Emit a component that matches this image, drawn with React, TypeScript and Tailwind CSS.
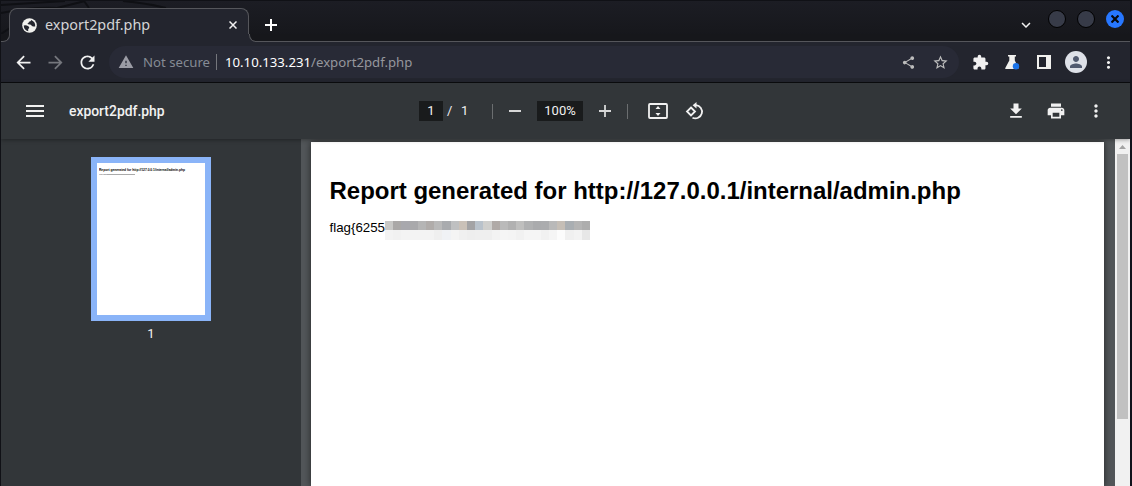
import type { ReactNode } from "react";
import {
  MdAdd, MdArrowBack, MdArrowForward, MdExpandMore, MdExtension,
  MdMenu, MdMoreVert, MdPerson, MdPrint, MdRefresh, MdRemove, MdShare,
  MdStarBorder, MdWarning, MdDownload,
} from "react-icons/md";

function Cell({ w, children }: { w: string; children: ReactNode }) {
  return <div className={`${w} flex h-full shrink-0 items-center justify-center`}>{children}</div>;
}

function Globe() {
  return (
    <svg className="ml-[12px] shrink-0" width="15" height="15" viewBox="0 0 15 15">
      <circle cx="7.5" cy="7.5" r="7.3" fill="#f1f1ee" />
      <path d="M1.7 7.4q3.2-.5 4.1.7 1 .4 1.4 1.2.2 1.4-1 1.6v2.3Q2 12 1.7 7.4ZM9.3 2Q8.8 3.6 7 3.8q-.3 1.4-1.6 1.8.4 1 2.6.9 1.6.2 1.8 1.6l1.5.4 1.9-.1Q13.600 4 9.300 2Z" fill="#23252e" />
    </svg>
  );
}

function WindowStrip() {
  return (
    <div className="relative h-[42px] shrink-0 overflow-hidden border-t border-[#101116] bg-linear-to-b from-[#1c1d24] to-[#15161a]">
      <svg className="absolute left-0 top-0" width="200" height="42" fill="none">
        <path d="M0 4 L64 0 M0 12 Q30 6 56 7 L84 0 M0 33 L9 27 M88 7 L83 0 M122 0 Q145 2 165 7" stroke="#0f1014" strokeWidth="2" />
      </svg>
      <div className="relative mt-[7px] flex h-[26px]">
        <div className="ml-2 flex h-[26px] w-[240px] shrink-0 items-start rounded-t-[8px] border-x border-t border-[#55565b] bg-[#23252e]">
          <div className="flex h-8 w-full items-center">
            <Globe />
            <span className="ml-2 font-['Noto_Sans',sans-serif] text-[14.4px] leading-5 text-[#d4d4d6]">export2pdf.php</span>
            <svg className="ml-auto mr-[11px]" width="8" height="8" viewBox="0 0 8 8"><path d="M.5.5l7 7M7.500.5l-7 7" stroke="#f1f1f1" strokeWidth="1.5" /></svg>
          </div>
        </div>
        <div className="flex h-[34px] w-11 items-center justify-center">
          <svg width="12" height="12"><path d="M6 0v12M0 6h12" stroke="#fff" strokeWidth="2" /></svg>
        </div>
        <MdExpandMore className="ml-[724px] mt-2 size-[18px] shrink-0 text-[#f1f1f1]" />
        <div className="ml-[13px] mt-[2px] size-[18px] shrink-0 rounded-full border border-black bg-[#373b48]" />
        <div className="ml-[11px] mt-[2px] size-[18px] shrink-0 rounded-full border border-black bg-[#373b48]" />
        <div className="ml-[11px] mt-[2px] flex size-[18px] shrink-0 items-center justify-center rounded-full bg-[#2777ff]">
          <svg width="8" height="8" viewBox="0 0 8 8"><path d="M.5.5l7 7M7.500.5l-7 7" stroke="#08090d" strokeWidth="2.2" /></svg>
        </div>
      </div>
      <div className="relative flex h-2 justify-between bg-[#23252e]">
        <div className="w-[9px] rounded-br-[7px] border-b border-r border-[#55565b] bg-[#16171b]" />
        <div className="w-[881px] rounded-bl-[7px] border-b border-l border-[#55565b] bg-[#16171b]" />
      </div>
    </div>
  );
}

function AddressBar() {
  return (
    <div className="flex h-[41px] shrink-0 items-center border-b border-[#0b0c0f] bg-[#23252e] text-[#f1f1f1]">
      <MdArrowBack className="ml-[12px] size-[21px] shrink-0" />
      <MdArrowForward className="ml-[11px] size-[21px] shrink-0 text-[#75777d]" />
      <MdRefresh className="ml-[11px] size-[21px] shrink-0" />
      <div className="ml-[11px] flex h-8 w-[850px] shrink-0 items-center rounded-full bg-[#282a36] font-['Noto_Sans',sans-serif] text-[13.2px] leading-5">
        <MdWarning className="ml-[9px] size-4 text-[#9b9ca5]" />
        <span className="ml-[9px] w-[67px] whitespace-nowrap text-[#858b94]">Not secure</span>
        <span className="ml-[6px] h-4 w-px bg-[#74767c]" />
        <span className="ml-[8px] text-white">10.10.133.231<span className="text-[#96979d]">/export2pdf.php</span></span>
        <MdShare className="ml-auto size-[15px] text-[#bdbdbd]" />
        <MdStarBorder className="ml-4 mr-[10px] size-[17px] text-[#bdbdbd]" />
      </div>
      <div className="ml-[5px] flex h-full shrink-0">
        <Cell w="w-8"><MdExtension className="size-[17px]" /></Cell>
        <Cell w="w-8">
          <svg width="16" height="16" viewBox="0 0 16 16">
            <path d="M4 1h8v1.500h-1.200V6.500l3.700 7.500q0 1-1 1H2q-1 0-.7-1L5.300 6.500v-4H4Z" fill="#f1f1ee" />
            <circle cx="12" cy="12.300" r="3.2" fill="#1a73e8" />
          </svg>
        </Cell>
        <Cell w="w-8">
          <svg width="14" height="14"><path fillRule="evenodd" d="M0 0h14v14H0ZM2 2v10h7V2Z" fill="#f1f1ee" /></svg>
        </Cell>
        <Cell w="w-8">
          <div className="flex size-[22px] items-center justify-center rounded-full bg-[#dee1e8]">
            <MdPerson className="size-[18px] text-[#515a6f]" />
          </div>
        </Cell>
        <Cell w="w-8"><MdMoreVert className="size-[19px]" /></Cell>
      </div>
    </div>
  );
}

function PdfToolbar() {
  return (
    <div className="relative z-10 flex h-14 shrink-0 items-center bg-[#323639] font-[Roboto,sans-serif] text-[13px] text-[#f1f1f1] shadow-[0_1px_4px_rgba(0,0,0,0.35)]">
      <MdMenu className="ml-[22px] size-6" />
      <span className="ml-[22px] w-[350px] text-[13.9px] font-medium">export2pdf.php</span>
      <span className="flex h-5 w-6 items-center justify-center bg-[#191b1c]">1</span>
      <span className="ml-[4px] w-[14px]">/</span>
      <span className="w-2">1</span>
      <span className="ml-[23px] h-[15px] w-px bg-[#6b6e70]" />
      <svg className="ml-4" width="12" height="12"><path d="M0 6h12" stroke="#d6d7d7" strokeWidth="2" /></svg>
      <span className="ml-4 flex h-5 w-[46px] items-center justify-center bg-[#191b1c]">100%</span>
      <svg className="ml-4" width="12" height="12"><path d="M0 6h12M6 0v12" stroke="#d6d7d7" strokeWidth="1.8" /></svg>
      <span className="ml-4 h-[15px] w-px bg-[#6b6e70]" />
      <svg className="ml-5" width="20" height="16" viewBox="0 0 20 16">
        <rect x="1" y="1" width="18" height="14" rx="1" fill="none" stroke="#f1f1f1" strokeWidth="1.8" />
        <path d="M10 3l2.5 3h-5ZM10 13l2.5-3h-5Z" fill="#f1f1f1" />
      </svg>
      <svg className="ml-[17px]" width="19" height="19" viewBox="0 0 19 19" fill="none" stroke="#f1f1f1" strokeWidth="1.8">
        <path d="M6 5.500l4 4-4 4-4-4Z" />
        <path d="M9.500 3.200h1.500a6.600 6.600 0 1 1-3.500 12.500" />
        <path d="M11.500 0v6.400L7.600 3.200Z" fill="#f1f1f1" stroke="none" />
      </svg>
      <MdDownload className="ml-auto size-5" />
      <MdPrint className="ml-5 size-5" />
      <MdMoreVert className="ml-5 mr-[24px] size-5" />
    </div>
  );
}

function Redaction() {
  return (
    <svg className="shrink-0" width="205" height="19" viewBox="0 0 205 19" shapeRendering="crispEdges">
      {TOP.map((c, i) => <rect key={i} x={i * 8.2} width="8.3" height="9" fill={c} />)}
      {BOTTOM.map((c, i) => <rect key={i} x={i * 8.2} y="9" width="8.3" height="10" fill={c} />)}
    </svg>
  );
}

const TOP = ["#c8c8c6", "#aaa8a7", "#a8a8ad", "#a9a9ab", "#b5b5b5", "#b0acaa", "#b9b9b9", "#a9abae", "#bfc0c1", "#cac1b8", "#a3a3a5", "#b9c2cb", "#cfcfcd", "#b0aaa7", "#bababa", "#b1b1b1", "#bfbfbe", "#b0b1b2", "#aaabad", "#abacae", "#b9b9b9", "#c5beb6", "#a9aeb2", "#b4b4b4", "#adadad"];
const BOTTOM = ["#f3f3f3", "#f1f1f1", "#f3f3f3", "#f3f3f3", "#f3f3f3", "#f3f3f3", "#efefef", "#f0f2f5", "#f4f4f4", "#f0f0f0", "#eeeeee", "#efefef", "#efefef", "#f3f3f3", "#f5f5f5", "#f4f4f4", "#f1f1f1", "#f5f5f5", "#f5f5f5", "#f1f1f1", "#f5f5f5", "#fcfcfc", "#f0f0f0", "#f3f3f3", "#e7e7e7"];

function Viewer() {
  return (
    <div className="flex min-h-0 flex-1 bg-[#525659]">
      <div className="flex w-[300px] shrink-0 flex-col items-center bg-[#323639] pt-[18px]">
        <div className="h-[164px] w-[120px] border-[6px] border-[#8ab4f8] bg-white pl-[2px] pt-1 font-['Liberation_Sans',sans-serif] text-black">
          <svg width="106" height="12">
            <text x="0" y="4.4" fontSize="3.3" fontWeight="700" textLength="86">Report generated for http://127.0.0.1/internal/admin.php</text>
            <text x="0" y="7.900" fontSize="1.9" fill="#555">flag&#123;6255</text>
            <path d="M7.500 7.500h28.500" stroke="#aaa" strokeWidth="1" />
          </svg>
        </div>
        <span className="mt-[3px] font-[Roboto,sans-serif] text-[13px] leading-5 text-[#f1f1f1]">1</span>
      </div>
      <div className="ml-[10px] mt-[3px] w-[793px] shrink-0 bg-white pl-[18.5px] pt-[34px] font-['Liberation_Sans',sans-serif] text-black shadow-[0_0_7px_rgba(0,0,0,0.6)]">
        <h1 className="whitespace-nowrap text-[23.98px] font-bold leading-[30px]">Report generated for http://127.0.0.1/internal/admin.php</h1>
        <div className="mt-[15px] flex h-[19px] items-start text-[13.3px] leading-[13px]">
          <span className="w-[55.5px] whitespace-nowrap">flag&#123;6255</span>
          <Redaction />
        </div>
      </div>
      <div className="ml-[11px] flex w-[15px] shrink-0 flex-col items-center bg-[#f1f1f1]">
        <svg className="mt-[6px]" width="7" height="4"><path d="M0 4L3.5 0L7 4Z" fill="#a3a3a3" /></svg>
        <div className="mt-[5px] h-[265px] w-[11px] bg-[#c1c1c1]" />
      </div>
    </div>
  );
}

export default function App() {
  return (
    <div className="flex h-[486px] w-[1132px] flex-col overflow-hidden border-l border-r-2 border-l-[#101116] border-r-[#10111a]">
      <WindowStrip />
      <AddressBar />
      <PdfToolbar />
      <Viewer />
    </div>
  );
}
